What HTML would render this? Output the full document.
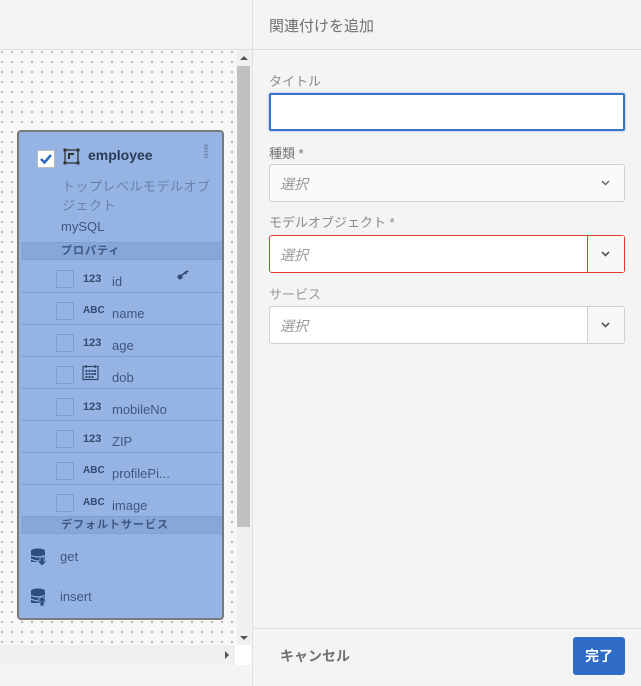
<!DOCTYPE html>
<html><head><meta charset="utf-8"><style>
*{margin:0;padding:0;box-sizing:border-box}
body{width:641px;height:686px;overflow:hidden;background:#f4f4f4;font-family:"Liberation Sans","Noto Sans CJK JP",sans-serif;position:relative}
.a{position:absolute}
.canvas{left:0;top:50px;width:237px;height:595px;background-color:#f7f7f7;background-image:radial-gradient(circle,#a8a8a8 0.9px,transparent 1.1px);background-size:10px 10px;background-position:-3px -3px}
.card{left:17px;top:130px;width:207px;height:490px;background:#95b4e3;border:2px solid #7a7a7a;border-radius:4px}
.t{color:#3f5680;font-size:13px;white-space:nowrap}
.cb{width:18px;height:18px;border:1px solid #7d9dcc;background:transparent}
.sep{height:1px;background:#7fa0d2;left:2px;width:201px}
.band{left:2px;width:201px;height:18px;background:#87a7d8;border-top:1px solid #7fa0d2;border-bottom:1px solid #7fa0d2;font-size:11px;font-weight:bold;color:#3f5680;letter-spacing:1px}
.ty{font-size:11px;font-weight:bold;color:#34496e}
.lbl{font-size:13px;color:#8a8a8a;left:269px}
.sel{left:269px;width:356px;height:38px;border:1px solid #d0d0d0;border-radius:3px;background:#fff}
.ph{position:absolute;left:10px;top:9px;font-size:14px;font-style:italic;color:#999}
.chev{position:absolute;right:0;top:0;width:37px;height:100%;border-left:1px solid #d0d0d0;background:#f7f7f7}
</style></head><body>
<div class="a canvas"></div>
<div class="a" style="left:0;top:0;width:253px;height:50px;background:#f4f4f4;border-bottom:1px solid #ddd"></div>
<div class="a" style="left:237px;top:50px;width:14px;height:595px;background:#f0f0f0"></div>
<div class="a" style="left:237px;top:66px;width:13px;height:461px;background:#c1c1c1"></div>
<div class="a" style="left:240px;top:56px;width:0;height:0;border-left:4px solid transparent;border-right:4px solid transparent;border-bottom:4px solid #555"></div>
<div class="a" style="left:240px;top:636px;width:0;height:0;border-left:4px solid transparent;border-right:4px solid transparent;border-top:4px solid #555"></div>
<div class="a" style="left:0;top:645px;width:235px;height:20px;background:#f0f0f0"></div>
<div class="a" style="left:235px;top:645px;width:16px;height:20px;background:#fff"></div>
<div class="a" style="left:225px;top:651px;width:0;height:0;border-top:4px solid transparent;border-bottom:4px solid transparent;border-left:4px solid #555"></div>

<div class="a card">
  <div class="a" style="left:18px;top:18px;width:18px;height:18px;background:#fff;border:1px solid #bbb"><svg width="16" height="16" viewBox="0 0 16 16"><path d="M3 8l3.5 3.5L13 4" stroke="#2d6bc4" stroke-width="2.5" fill="none"/></svg></div>
  <svg class="a" style="left:44px;top:16px" width="17" height="17" viewBox="0 0 17 17"><rect x="2" y="2" width="13" height="13" fill="none" stroke="#333" stroke-width="1.3"/><rect x="0.5" y="0.5" width="3" height="3" fill="#333"/><rect x="13.5" y="0.5" width="3" height="3" fill="#333"/><rect x="0.5" y="13.5" width="3" height="3" fill="#333"/><rect x="13.5" y="13.5" width="3" height="3" fill="#333"/><rect x="5" y="5" width="6" height="6" fill="#333"/><rect x="7" y="7" width="4" height="4" fill="#95b4e3"/></svg>
  <div class="a" style="left:69px;top:15px;font-size:14px;font-weight:bold;color:#2c3a52">employee</div>
  <div class="a" style="left:185px;top:12px;width:4px;height:14px;background-image:radial-gradient(#6c84aa 0.7px,transparent 0.9px);background-size:2px 3px"></div>
  <div class="a t" style="left:43px;top:45px;color:#6680aa;font-size:13px;line-height:19px;width:160px;white-space:normal;letter-spacing:0.5px">トップレベルモデルオブジェクト</div>
  <div class="a t" style="left:42px;top:87px">mySQL</div>
  <div class="a band" style="top:110px;padding-left:40px;line-height:16px">プロパティ</div>
  <div class="a sep" style="top:160px"></div><div class="a sep" style="top:192px"></div><div class="a sep" style="top:224px"></div><div class="a sep" style="top:256px"></div><div class="a sep" style="top:288px"></div><div class="a sep" style="top:320px"></div><div class="a sep" style="top:352px"></div>
  <div class="a cb" style="left:37px;top:138px"></div><div class="a ty" style="left:64px;top:141px">123</div><div class="a t" style="left:93px;top:142px">id</div>
  <svg class="a" style="left:158px;top:138px" width="12" height="10" viewBox="0 0 12 10"><circle cx="3" cy="7" r="2.5" fill="#34496e"/><path d="M4 6L10 1M8 2.5l1.5 1.5M10 1l1 1" stroke="#34496e" stroke-width="1.6"/></svg>
  <div class="a cb" style="left:37px;top:170px"></div><div class="a ty" style="left:64px;top:173px;font-size:10px">ABC</div><div class="a t" style="left:93px;top:174px">name</div>
  <div class="a cb" style="left:37px;top:202px"></div><div class="a ty" style="left:64px;top:205px">123</div><div class="a t" style="left:93px;top:206px">age</div>
  <div class="a cb" style="left:37px;top:234px"></div>
  <svg class="a" style="left:63px;top:232px" width="17" height="17" viewBox="0 0 17 17"><rect x="1" y="2.5" width="15" height="13" fill="none" stroke="#34496e" stroke-width="1.2"/><path d="M4 1v3M13 1v3" stroke="#34496e" stroke-width="1.4"/><g fill="#34496e"><rect x="3.5" y="6" width="2" height="2"/><rect x="6.5" y="6" width="2" height="2"/><rect x="9.5" y="6" width="2" height="2"/><rect x="12" y="6" width="2" height="2"/><rect x="3.5" y="9" width="2" height="2"/><rect x="6.5" y="9" width="2" height="2"/><rect x="9.5" y="9" width="2" height="2"/><rect x="12" y="9" width="2" height="2"/><rect x="3.5" y="12" width="2" height="2"/><rect x="6.5" y="12" width="2" height="2"/><rect x="9.5" y="12" width="2" height="2"/></g></svg>
  <div class="a t" style="left:93px;top:238px">dob</div>
  <div class="a cb" style="left:37px;top:266px"></div><div class="a ty" style="left:64px;top:269px">123</div><div class="a t" style="left:93px;top:270px">mobileNo</div>
  <div class="a cb" style="left:37px;top:298px"></div><div class="a ty" style="left:64px;top:301px">123</div><div class="a t" style="left:93px;top:302px">ZIP</div>
  <div class="a cb" style="left:37px;top:330px"></div><div class="a ty" style="left:64px;top:333px;font-size:10px">ABC</div><div class="a t" style="left:93px;top:334px">profilePi...</div>
  <div class="a cb" style="left:37px;top:362px"></div><div class="a ty" style="left:64px;top:365px;font-size:10px">ABC</div><div class="a t" style="left:93px;top:366px">image</div>
  <div class="a band" style="top:384px;padding-left:40px;line-height:16px">デフォルトサービス</div>
  <svg class="a" style="left:11px;top:416px" width="18" height="18" viewBox="0 0 18 18"><ellipse cx="8" cy="3" rx="7" ry="2.5" fill="#2e4c7c"/><rect x="1" y="3" width="14" height="11" fill="#2e4c7c"/><path d="M1 7.5q7 3 14 0M1 11q4 2 7 1.8" stroke="#95b4e3" stroke-width="1.2" fill="none"/><path d="M10 9h4v4h3l-5 5-5-5h3z" fill="#2e4c7c" stroke="#95b4e3" stroke-width="0.8"/></svg>
  <div class="a t" style="left:41px;top:417px">get</div>
  <svg class="a" style="left:11px;top:456px" width="18" height="18" viewBox="0 0 18 18"><ellipse cx="8" cy="3" rx="7" ry="2.5" fill="#2e4c7c"/><rect x="1" y="3" width="14" height="12" fill="#2e4c7c"/><path d="M1 7.5q7 3 14 0M1 11q4 2 7 1.8" stroke="#95b4e3" stroke-width="1.2" fill="none"/><path d="M12 8l5 5h-3v5h-4v-5H7z" fill="#2e4c7c" stroke="#95b4e3" stroke-width="0.8"/></svg>
  <div class="a t" style="left:41px;top:457px">insert</div>
</div>

<div class="a" style="left:252px;top:0;width:1px;height:686px;background:#e0e0e0"></div>
<div class="a" style="left:269px;top:15px;font-size:15px;color:#707070">関連付けを追加</div>
<div class="a" style="left:253px;top:49px;width:388px;height:1px;background:#dcdcdc"></div>
<div class="a lbl" style="top:71px">タイトル</div>
<div class="a" style="left:269px;top:93px;width:356px;height:38px;background:#fff;border:2px solid #3a72c6;border-radius:2px;box-shadow:0 0 2px #8fb0e0"></div>
<div class="a lbl" style="top:143px;color:#707070">種類 *</div>
<div class="a sel" style="top:164px;background:#fafafa"><span class="ph">選択</span><svg class="a" style="right:14px;top:15px" width="9" height="6" viewBox="0 0 9 6"><path d="M1 1l3.5 3.5L8 1" stroke="#666" stroke-width="1.4" fill="none"/></svg></div>
<div class="a lbl" style="top:212px">モデルオブジェクト *</div>
<div class="a sel" style="top:235px;border-color:#e03a2c"><span class="ph">選択</span><div class="chev" style="border-left-color:#e03a2c"><svg class="a" style="left:13px;top:15px" width="9" height="6" viewBox="0 0 9 6"><path d="M1 1l3.5 3.5L8 1" stroke="#555" stroke-width="1.6" fill="none"/></svg></div></div>
<div class="a lbl" style="top:284px;color:#999">サービス</div>
<div class="a sel" style="top:306px"><span class="ph">選択</span><div class="chev"><svg class="a" style="left:13px;top:15px" width="9" height="6" viewBox="0 0 9 6"><path d="M1 1l3.5 3.5L8 1" stroke="#555" stroke-width="1.6" fill="none"/></svg></div></div>
<div class="a" style="left:253px;top:628px;width:388px;height:1px;background:#dcdcdc"></div>
<div class="a" style="left:280px;top:646px;font-size:14px;font-weight:bold;color:#707070">キャンセル</div>
<div class="a" style="left:573px;top:637px;width:52px;height:38px;background:#2f6cc7;border-radius:3px;color:#fff;font-size:14px;font-weight:bold;text-align:center;line-height:38px">完了</div>
</body></html>
